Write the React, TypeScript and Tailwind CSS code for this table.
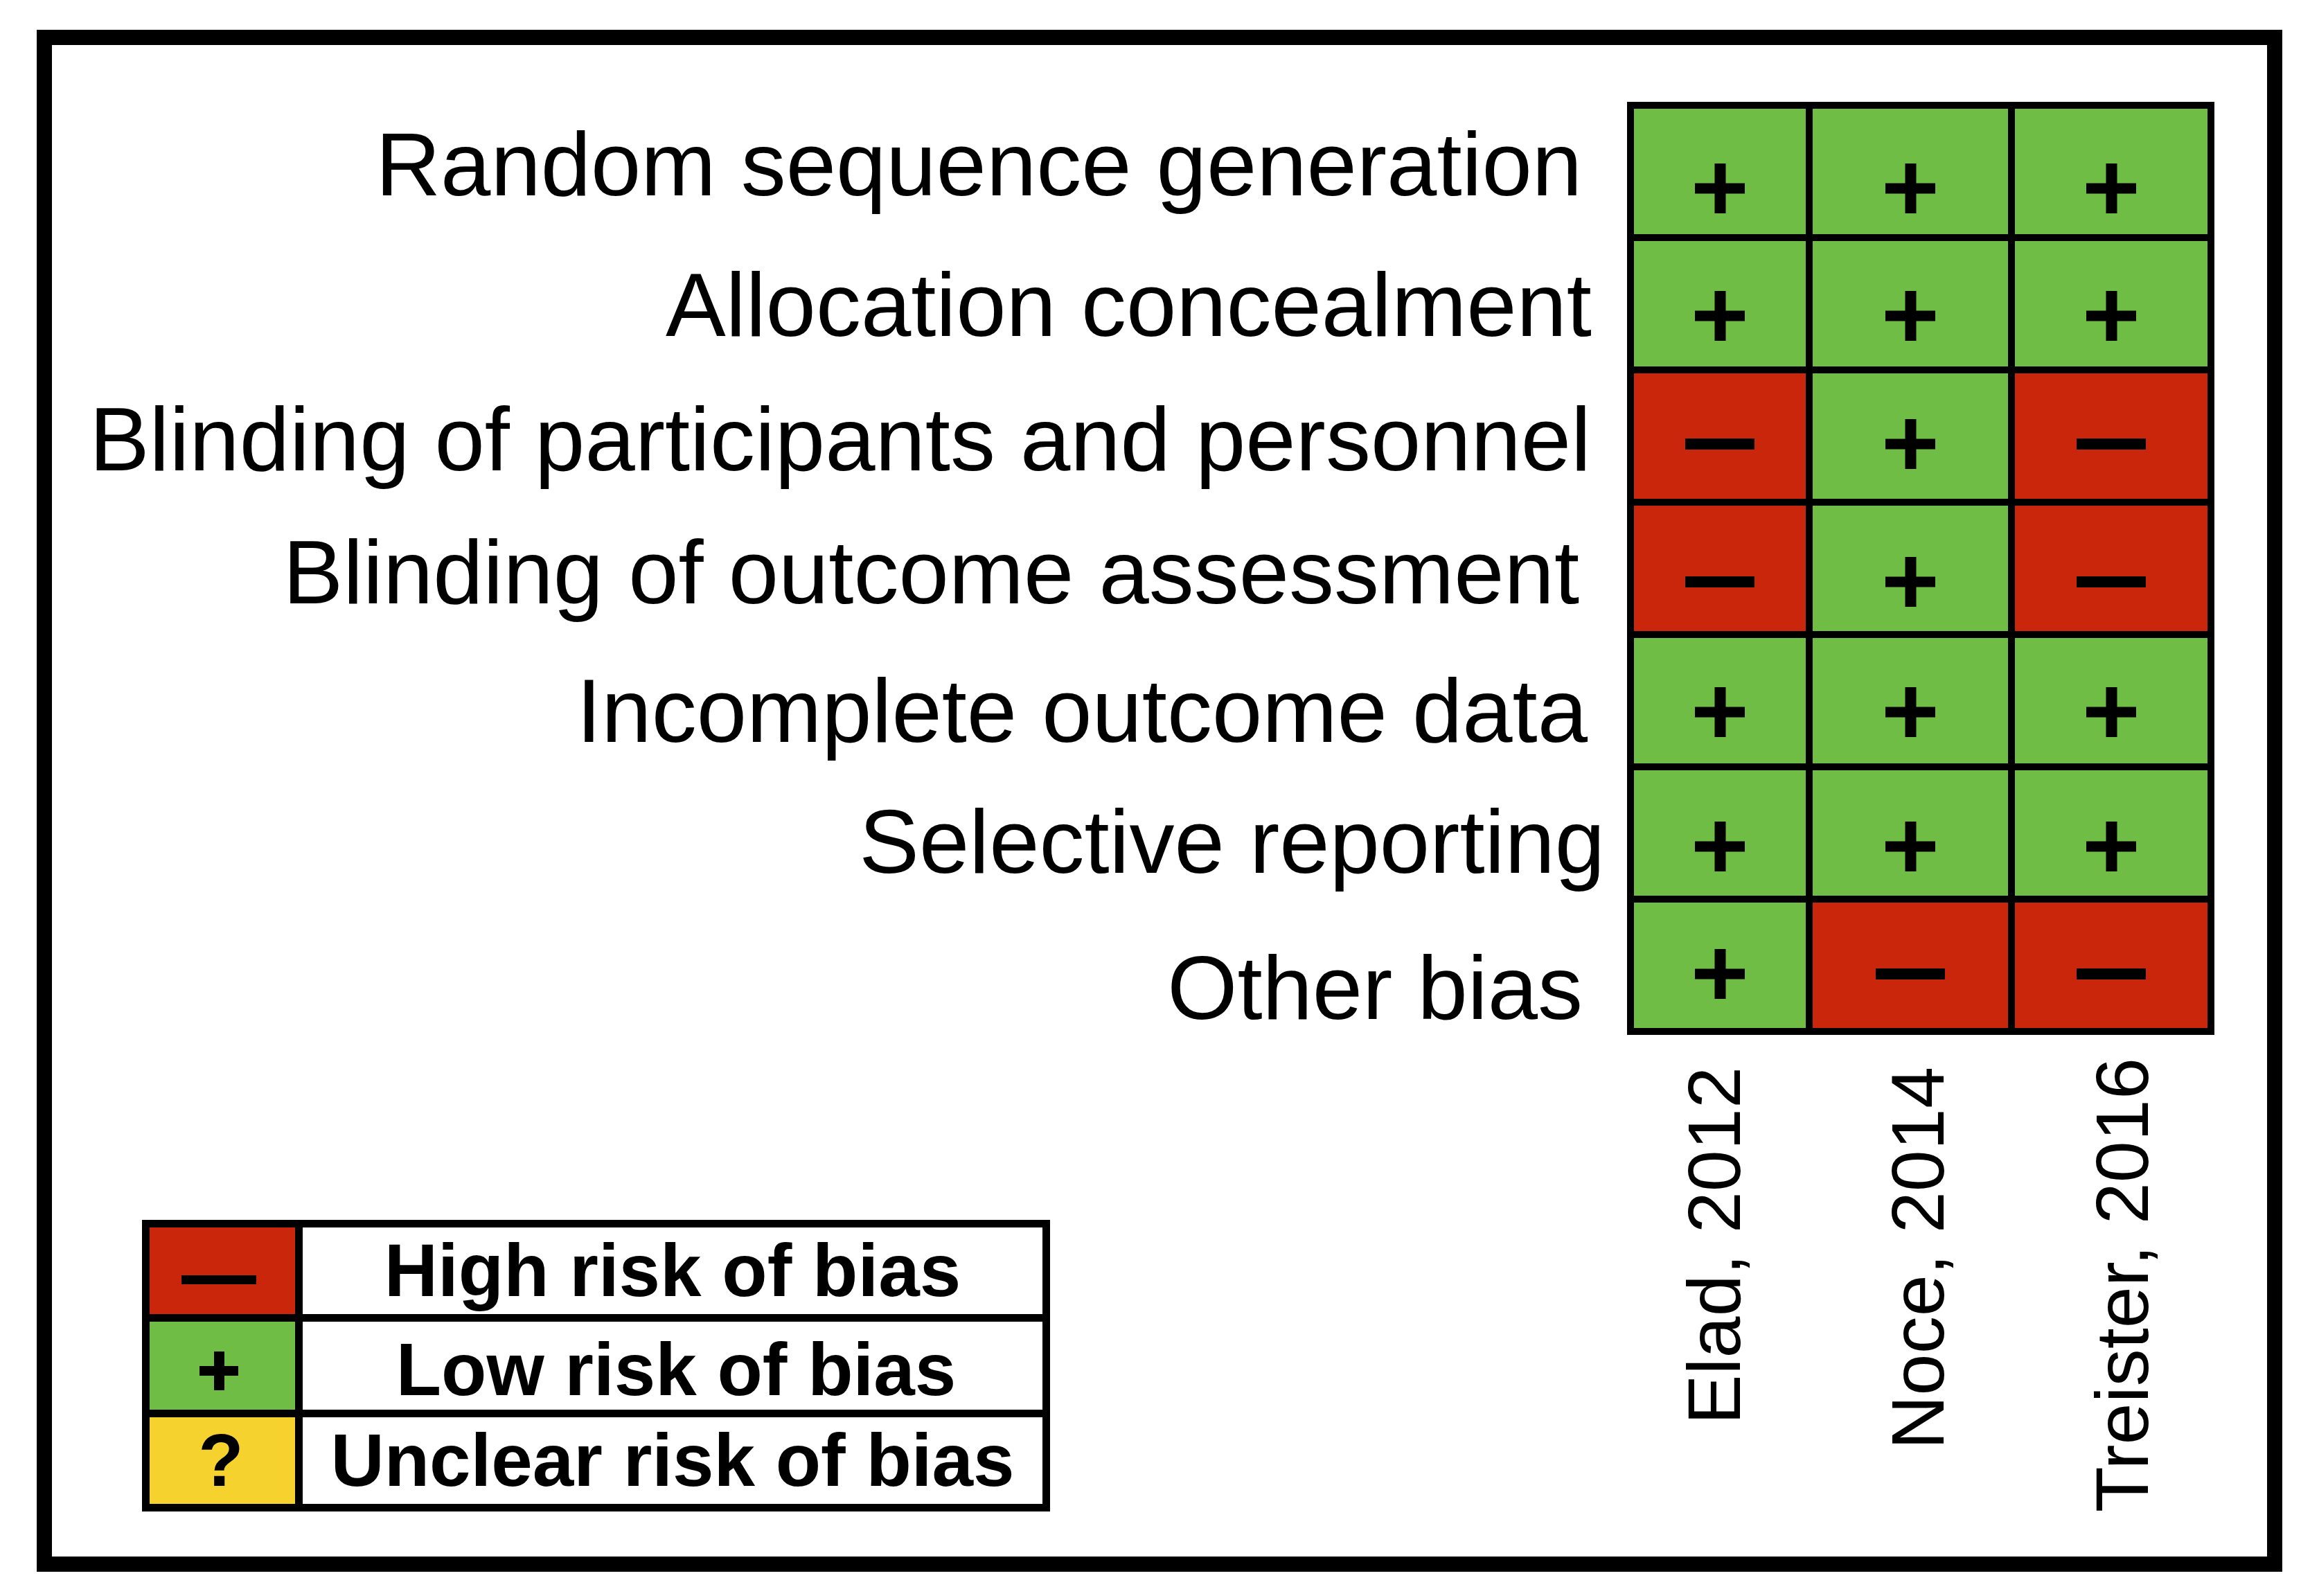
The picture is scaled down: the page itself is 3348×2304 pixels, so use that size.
import React from "react";

type Mark = "+" | "-";

const rows: { label: string; labelClass: string; cellClass: string; marks: Mark[] }[] = [
  { label: "Random sequence generation", labelClass: "mt-[25px] mr-[65px]", cellClass: "pt-[48px]", marks: ["+", "+", "+"] },
  { label: "Allocation concealment", labelClass: "mt-[73px] mr-[51px]", cellClass: "pt-[34px]", marks: ["+", "+", "+"] },
  { label: "Blinding of participants and personnel", labelClass: "mt-[64px] mr-[52px]", cellClass: "pt-[22px]", marks: ["-", "+", "-"] },
  { label: "Blinding of outcome assessment", labelClass: "mt-[62px] mr-[69px]", cellClass: "pt-[38px]", marks: ["-", "+", "-"] },
  { label: "Incomplete outcome data", labelClass: "mt-[70px] mr-[57px]", cellClass: "pt-[32px]", marks: ["+", "+", "+"] },
  { label: "Selective reporting", labelClass: "mt-[59px] mr-[32px]", cellClass: "pt-[38px]", marks: ["+", "+", "+"] },
  { label: "Other bias", labelClass: "mt-[81px] mr-[64px]", cellClass: "pt-[24px]", marks: ["+", "-", "-"] },
];

const studies = [
  { name: "Elad, 2012", className: "mt-[46px] mr-[16px]" },
  { name: "Noce, 2014", className: "mt-[46px] ml-[22px]" },
  { name: "Treister, 2016", className: "mt-[33px] ml-[32px]" },
];

function Plus({ size = 72, bar = 15 }: { size?: number; bar?: number }) {
  const o = (size - bar) / 2;
  return (
    <svg width={size} height={size} viewBox={`0 0 ${size} ${size}`}>
      <rect x={0} y={o} width={size} height={bar} fill="#000" />
      <rect x={o} y={0} width={bar + 1} height={size} fill="#000" />
    </svg>
  );
}

function Minus({ width = 100, bar = 16 }: { width?: number; bar?: number }) {
  return <div className="bg-black" style={{ width, height: bar }} />;
}

export default function App() {
  return (
    <div className="min-h-screen w-[3348px] h-[2304px] bg-white pl-[53px] pt-[43px] font-['Liberation_Sans',Arial,Helvetica,sans-serif] text-black">
      <div className="flex w-[3242px] h-[2226px] border-[22px] border-black">
        {/* left side: row labels + legend */}
        <div className="flex flex-1 flex-col">
          <div className="flex flex-col items-end pt-[82px]">
            {rows.map((r) => (
              <div key={r.label} className={`h-[130px] text-[130px] leading-none whitespace-nowrap ${r.labelClass}`}>
                {r.label}
              </div>
            ))}
          </div>

          {/* legend */}
          <div className="mt-auto mb-[65px] ml-[130px] grid w-fit grid-cols-[210px_1068px] grid-rows-[125px_127px_125px] gap-[11px] bg-black p-[11px]">
            <div className="flex items-center justify-center bg-[#c9260b] pt-[26px] pr-[10px]">
              <Minus width={108} bar={13} />
            </div>
            <div className="flex items-center justify-center bg-white text-[107px] font-bold leading-none whitespace-nowrap">
              High risk of bias
            </div>
            <div className="flex items-center justify-center bg-[#6fbd44] pt-[14px] pr-[10px]">
              <Plus size={56} bar={14} />
            </div>
            <div className="flex items-center justify-center bg-white pl-[10px] pt-[12px] text-[107px] font-bold leading-none whitespace-nowrap">
              Low risk of bias
            </div>
            <div className="flex items-center justify-center bg-[#f5d22d] pr-[4px] text-[107px] font-bold leading-none">
              ?
            </div>
            <div className="flex items-center justify-center bg-white text-[107px] font-bold leading-none whitespace-nowrap">
              Unclear risk of bias
            </div>
          </div>
        </div>

        {/* right side: grid + study names */}
        <div className="flex flex-col pt-[82px] pr-[76px]">
          <div className="grid grid-cols-[248px_282px_278px] auto-rows-[181px] gap-[10px] bg-black p-[10px]">
            {rows.map((r) =>
              r.marks.map((m, i) => (
                <div
                  key={r.label + i}
                  className={`flex items-center justify-center ${r.cellClass} ${m === "+" ? "bg-[#6fbd44]" : "bg-[#c9260b]"}`}
                >
                  {m === "+" ? <Plus /> : <Minus />}
                </div>
              ))
            )}
          </div>
          <div className="grid grid-cols-[248px_282px_278px] gap-[10px] px-[10px]">
            {studies.map((s) => (
              <div key={s.name} className="flex justify-center items-start">
                <div className={`[writing-mode:vertical-rl] rotate-180 text-[108px] leading-none whitespace-nowrap ${s.className}`}>
                  {s.name}
                </div>
              </div>
            ))}
          </div>
        </div>
      </div>
    </div>
  );
}
